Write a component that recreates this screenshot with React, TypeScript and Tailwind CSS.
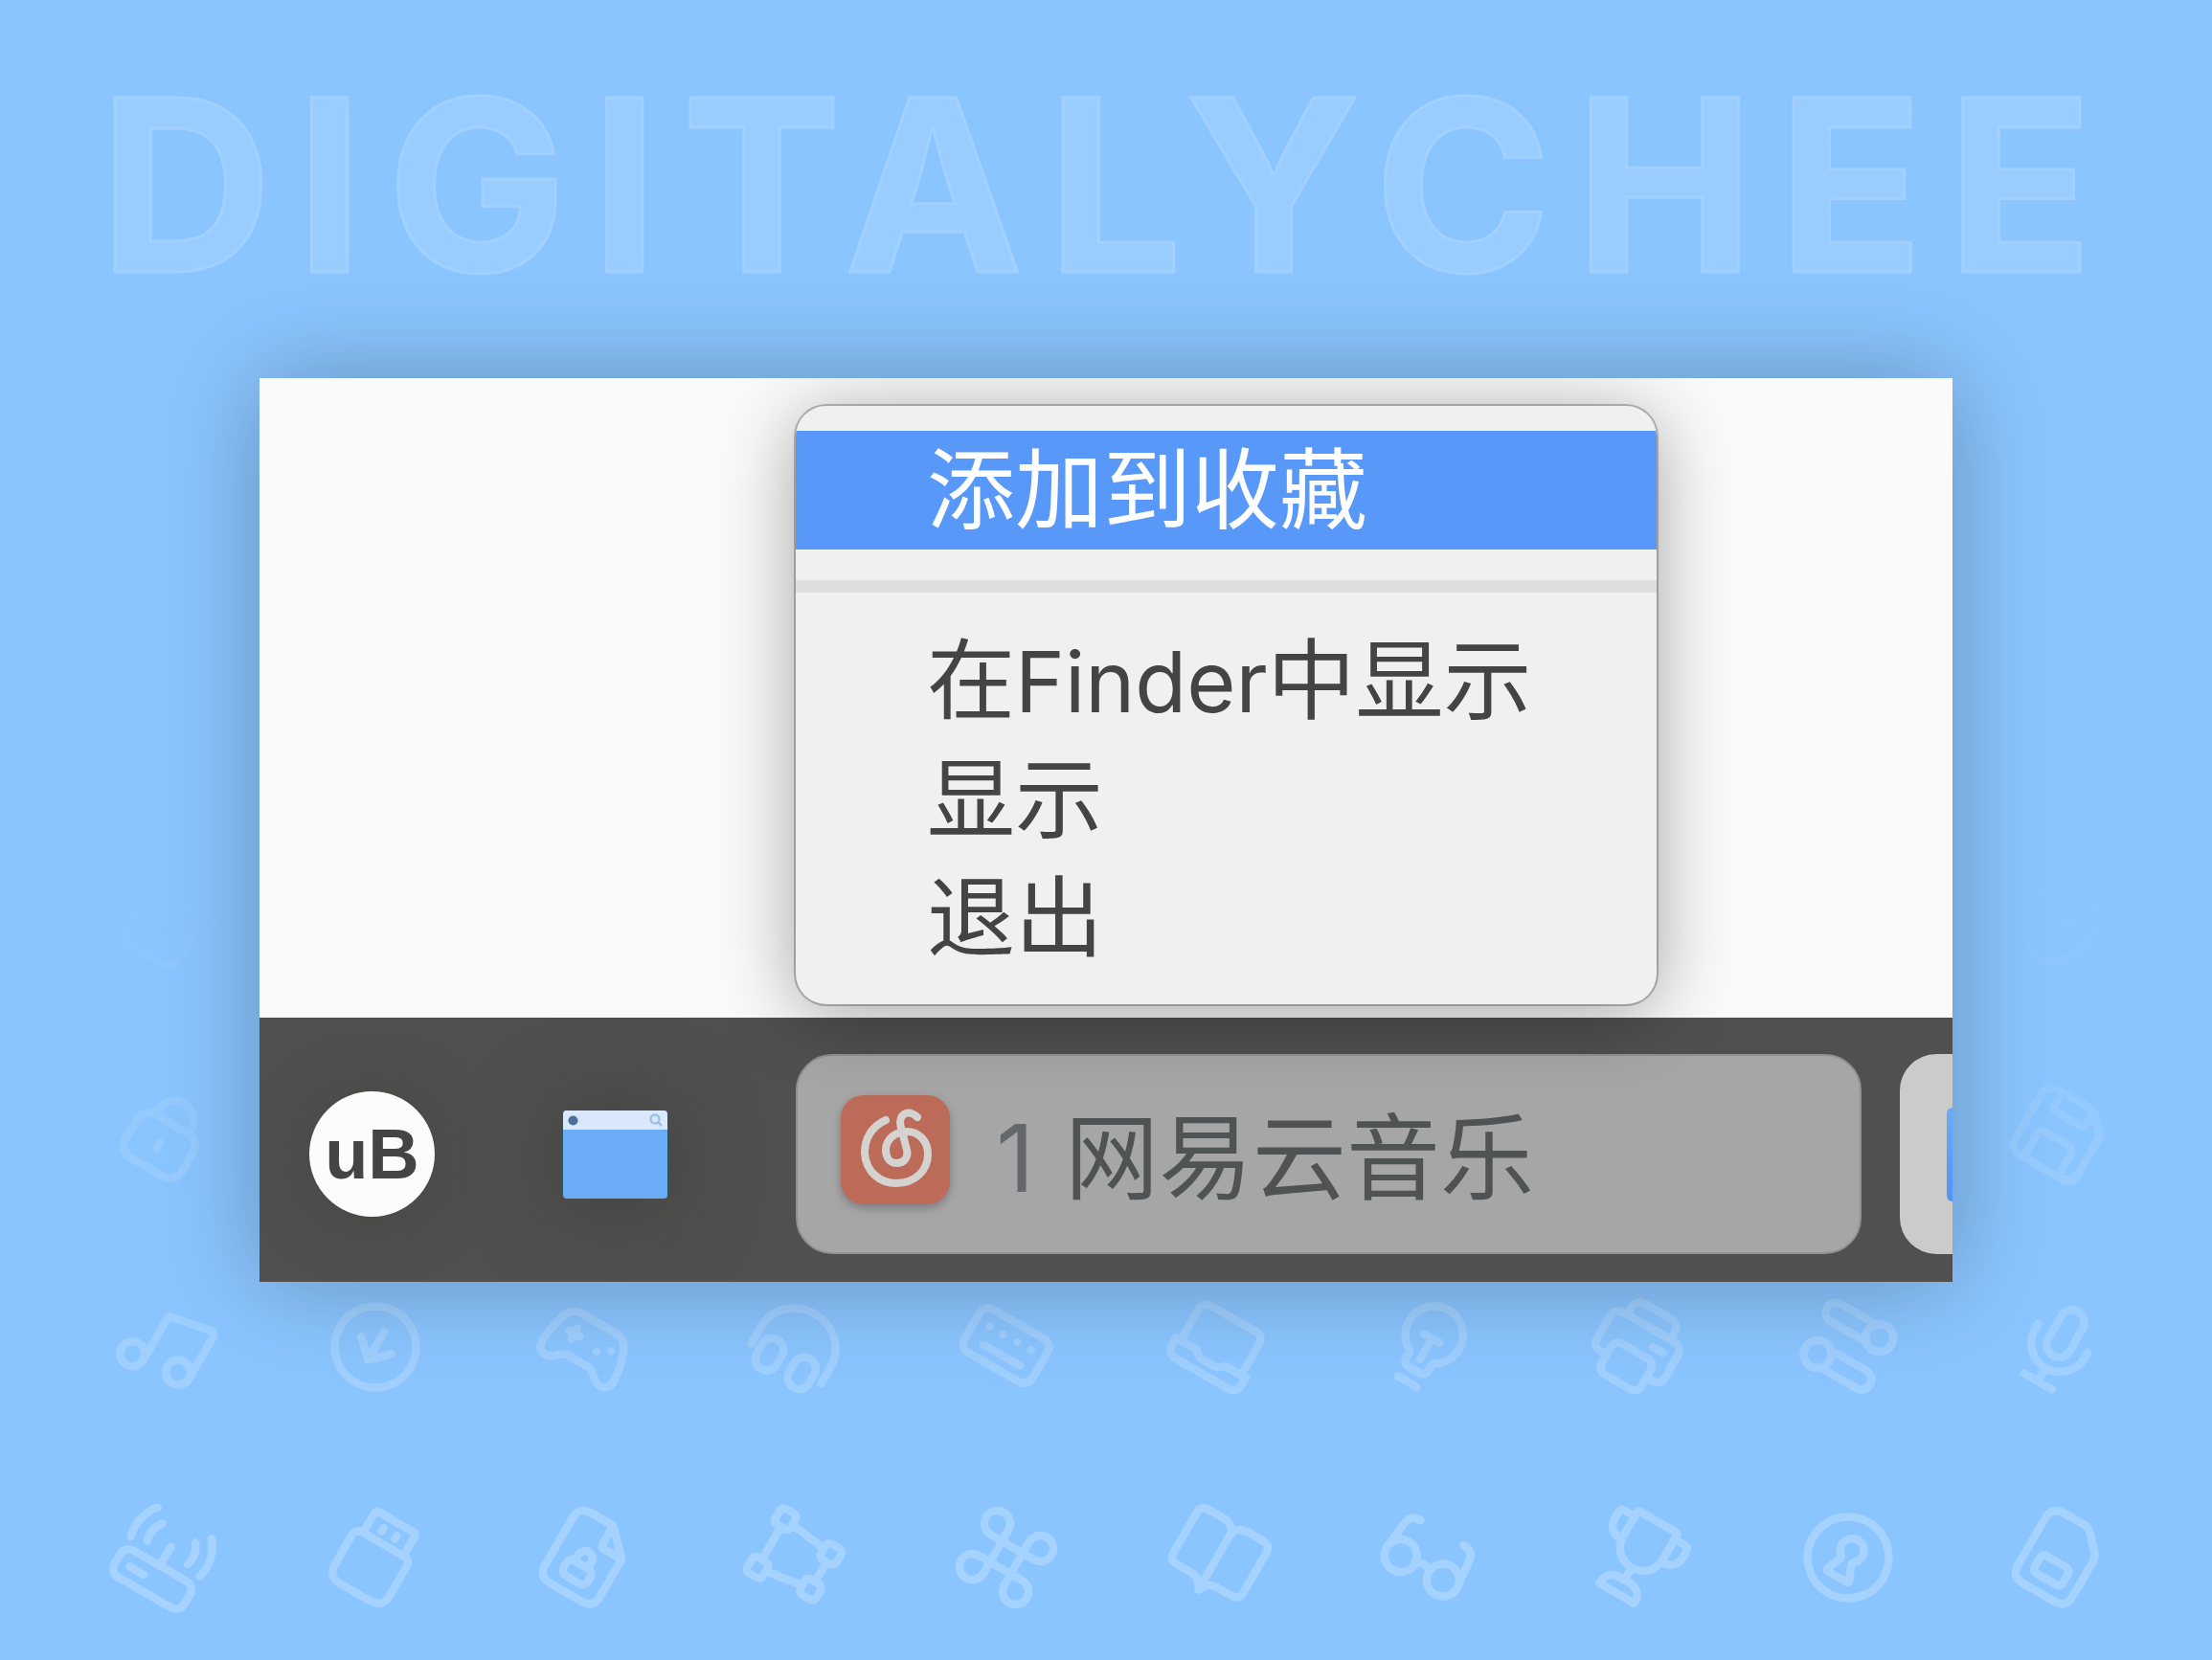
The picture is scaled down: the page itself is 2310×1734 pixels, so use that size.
import type { ReactNode } from "react";

const SANS = "font-[Inter,'Noto_Sans_CJK_SC',sans-serif]";

/* Background glyphs are drawn upright around (0,0) and tilted by the Glyph frame. */
function Glyph({ children }: { children: ReactNode }) {
  return (
    <svg
      viewBox="-60 -60 120 120"
      className="size-[120px] shrink-0 overflow-visible"
      fill="none"
      stroke="currentColor"
      strokeWidth="8.5"
      strokeLinecap="round"
      strokeLinejoin="round"
      aria-hidden="true"
    >
      <g transform="rotate(30)">{children}</g>
    </svg>
  );
}

const Edit = () => (
  <Glyph>
    <rect x="-33" y="-29" width="64" height="65" rx="14" />
    <path d="M33 -36L44 -27M-6 8L-1 8" />
  </Glyph>
);
const Shield = () => (
  <Glyph>
    <path d="M0 -42L34 -30V-4C34 20 18 34 0 41C-18 34 -34 20 -34 -4V-30Z" />
    <path d="M-15 -4L-6 6L15 -15" />
  </Glyph>
);
const Lock = () => (
  <Glyph>
    <rect x="-34" y="-15" width="68" height="52" rx="14" />
    <path d="M-20 -15V-20a20 20 0 0 1 40 0V-15M-1 8V16" />
  </Glyph>
);
const Floppy = () => (
  <Glyph>
    <path d="M-24 -42H12q5 0 9 4L33 -26q4 4 4 9V24q0 13 -13 13H-25q-13 0 -13 -13V-28q0 -14 14 -14Z" />
    <path d="M-20 -42V-26q0 5 5 5H14q5 0 5 -5V-40M-21 37V11q0 -8 8 -8H12q8 0 8 8V37" />
  </Glyph>
);
const Music = () => (
  <Glyph>
    <circle cx="-25.5" cy="23" r="13" />
    <circle cx="25.5" cy="16" r="13" />
    <path d="M-12.5 23V-27q0 -3 3 -3.6L34 -38.8q4.500 -.7 4.500 3.500V16" />
  </Glyph>
);
const ArrowCircle = () => (
  <Glyph>
    <circle r="42.500" />
    <path d="M-18 -2L0 15.500L18 -2M0 -18V15" />
  </Glyph>
);
const Gamepad = () => (
  <Glyph>
    <path d="M-20 -28H18C28 -28 33 -24 36 -16C40 -5 43 7 43 17C43 25 37 29 31 28C23 27 21 17 12 17H-12C-21 17 -23 27 -31 28C-38 29 -43 25 -43 17C-43 7 -40 -5 -37 -16C-34 -24 -29 -28 -20 -28Z" />
    <path d="M-24 -6H-11M-17.500 -12.500V.5" />
    <path d="M12 -1h.01M25 -9.500h.01" />
  </Glyph>
);
const Headphones = () => (
  <Glyph>
    <path d="M-42 20V0A42 40 0 0 1 42 0V20" />
    <rect x="-32" y="3" width="24" height="35" rx="12" />
    <rect x="7" y="3" width="24" height="35" rx="12" />
  </Glyph>
);
const Keyboard = () => (
  <Glyph>
    <rect x="-42" y="-27" width="82" height="52" rx="10" />
    <path d="M-26 -10h.01M-9.500 -10h.01M7.500 -10h.01M24 -10h.01M-22 10H22" />
  </Glyph>
);
const Laptop = () => (
  <Glyph>
    <path d="M-36.500 13V-24q0 -10 10 -10H26.500q10 0 10 10V13" />
    <path d="M-42 13H-19C-14 13 -14 19 -8 19H8C14 19 14 13 19 13H42V21q0 11 -11 11H-31q-11 0 -11 -11Z" />
  </Glyph>
);
const Bulb = () => (
  <Glyph>
    <path d="M-15 12A30 30 0 1 1 14 12C12 15 13 17 13 20Q13 28 5 28H-6Q-14 28 -14 20C-14 17 -13 15 -15 12Z" />
    <path d="M-10 -10H9M-.5 -10V15M-12 42H11" />
  </Glyph>
);
const Printer = () => (
  <Glyph>
    <path d="M-26 -24V-32q0 -11 11 -11H15q11 0 11 11V-24" />
    <path d="M-24 23H-31q-10 0 -10 -10V-12q0 -12 12 -12H29q12 0 12 12V13q0 10 -10 10H24" />
    <rect x="-24" y="5" width="48" height="37" rx="9" />
    <path d="M14 -8H26" />
  </Glyph>
);
const Toggles = () => (
  <Glyph>
    <circle cx="23.500" cy="-24.500" r="14.500" />
    <circle cx="-24" cy="22.500" r="14.500" />
    <path d="M13 -35H-29a10.500 10.500 0 0 0 0 21H13M-13 12H29a10.500 10.500 0 0 1 0 21H-13" />
  </Glyph>
);
const Mic = () => (
  <Glyph>
    <rect x="-14" y="-42" width="26" height="53" rx="13" />
    <path d="M-31 -10V-4A30 30 0 0 0 29 -4V-10M-1 27V42M-18 42H16" />
  </Glyph>
);
const Router = () => (
  <Glyph>
    <rect x="-42" y="10" width="84" height="32" rx="10" />
    <path d="M-27 26.500H-10M0 10V-13" />
    <path d="M-24.500 -6A26 26 0 0 1 -20 -29.500M20 -29.500A26 26 0 0 1 24.500 -6" />
    <path d="M-41.500 -1.500A43 43 0 0 1 -32.500 -41.500M32.500 -41.500A43 43 0 0 1 41.500 -1.500" />
  </Glyph>
);
const Usb = () => (
  <Glyph>
    <path d="M-24 -16V-40q0 -3 3 -3H21q3.500 0 3.500 3V-16" />
    <path d="M-25 -16H25q8 0 8 9V27q0 15 -15 15H-18q-15 0 -15 -15V-7q0 -9 8 -9Z" />
    <path d="M-8 -31V-27M8 -31V-27" />
  </Glyph>
);
const LockedFile = () => (
  <Glyph>
    <path d="M8 -43H-18q-15 0 -15 15V28q0 14 14 14H19q14 0 14 -14V-17L8 -43V-21q0 4 4 4H33" />
    <rect x="-15" y="9" width="29" height="18" rx="6" />
    <path d="M-8.500 9V2a8 8.500 0 0 1 16 0V9" />
  </Glyph>
);
const VectorBox = () => (
  <Glyph>
    <rect x="-39" y="-39" width="19" height="19" rx="5" />
    <rect x="20.500" y="-31" width="19" height="19" rx="5" />
    <rect x="20.500" y="11.500" width="19" height="19" rx="5" />
    <rect x="-39" y="19.500" width="19" height="19" rx="5" />
    <path d="M-20 -28L20 -23M30 -12V11M20 22L-20 28M-29.500 19V-20" />
  </Glyph>
);
const Command = () => (
  <Glyph>
    <path d="M12.500 -26V26a13.500 13.500 0 1 0 13.500 -13.500H-26a13.500 13.500 0 1 0 13.500 13.500V-26a13.500 13.500 0 1 0 -13.500 13.500H26a13.500 13.500 0 1 0 -13.500 -13.500" />
  </Glyph>
);
const Book = () => (
  <Glyph>
    <path d="M0 -26C0 -35 -7 -39 -15 -39H-33q-9 0 -9 9V18q0 9 9 9H-16C-8 27 -3 31 0 39C3 31 8 27 16 27H33q9 0 9 -9V-30q0 -9 -9 -9H15C7 -39 0 -35 0 -26V28" />
  </Glyph>
);
const Glasses = () => (
  <Glyph>
    <circle cx="-25.500" cy="12.500" r="17" />
    <circle cx="25.500" cy="12.500" r="17" />
    <path d="M-8.500 10Q0 6 8.500 10M-42.500 12L-39 -19q1 -11 13 -11M42.500 12L39 -19q-1 -11 -13 -11" />
  </Glyph>
);
const Trophy = () => (
  <Glyph>
    <path d="M-21 -43H21q3 0 3 3V-13C24 3 13 12 0 12C-13 12 -24 3 -24 -13V-40q0 -3 3 -3Z" />
    <path d="M-24 -36H-36q-5 0 -5 5V-23C-41 -14 -33 -8 -24 -8M24 -36H36q5 0 5 5V-23C41 -14 33 -8 24 -8" />
    <path d="M0 12V27M-21 43C-21 33 -15 27 -6 27H6C15 27 21 33 21 43Z" />
  </Glyph>
);
const Keyhole = () => (
  <Glyph>
    <circle r="42.500" />
    <path d="M-7 2A12.500 12.500 0 1 1 7 2Q6 4 7 6L13 20q1 3 -2 3H-11q-3 0 -2 -3L-7 6Q-6 4 -7 2Z" />
  </Glyph>
);
const SimCard = () => (
  <Glyph>
    <path d="M-18 -43H6q5 0 9 4L29 -24q4 4 4 10V28q0 14 -14 14H-19q-14 0 -14 -14V-28q0 -15 15 -15Z" />
    <rect x="-17" y="5" width="34" height="21" rx="5" />
  </Glyph>
);

const ROWS = [
  [Edit, Shield],
  [Lock, Floppy],
  [Music, ArrowCircle, Gamepad, Headphones, Keyboard, Laptop, Bulb, Printer, Toggles, Mic],
  [Router, Usb, LockedFile, VectorBox, Command, Book, Glasses, Trophy, Keyhole, SimCard],
];

function Backdrop() {
  return (
    <div className="col-start-1 row-start-1 flex flex-col justify-between pb-[47px]">
      <h1 className="pt-[68px] pl-1 text-center font-[Inter,sans-serif] text-[250px] leading-[250px] font-bold tracking-widest whitespace-nowrap text-[#99ccff] [-webkit-text-stroke:3px_#a3d1ff]">
        DIGITALYCHEE
      </h1>
      <div className="flex flex-col gap-[100px] pr-[100px] pl-28 text-[#a5d2ff] [mask-image:linear-gradient(to_bottom,transparent_0px,black_640px)]">
        {ROWS.map((row, i) => (
          <div key={i} className="flex justify-between">
            {row.map((Icon, j) => (
              <Icon key={j} />
            ))}
          </div>
        ))}
      </div>
    </div>
  );
}

const ITEM = "block h-[124px] w-full pl-[137px] text-left text-[92px] leading-[124px] whitespace-nowrap";

function ContextMenu() {
  return (
    <div
      role="menu"
      className="relative z-10 w-[899px] overflow-clip rounded-[32px] bg-[#f0f0f0] pt-[26px] pb-7 text-[#444444] shadow-[0_0_0_2px_rgba(0,0,0,0.24),0_10px_80px_rgba(0,0,0,0.35)]"
    >
      <button role="menuitem" className={`${ITEM} bg-[#5898f8] text-white`}>
        添加到收藏
      </button>
      <hr className="mt-8 mb-[30px] h-[13px] border-0 bg-[#dedede]" />
      <button role="menuitem" className={ITEM}>
        在<span className="text-[88px]">Finder</span>中显示
      </button>
      <button role="menuitem" className={ITEM}>
        显示
      </button>
      <button role="menuitem" className={ITEM}>
        退出
      </button>
    </div>
  );
}

function WindowIcon() {
  return (
    <svg viewBox="0 0 109 92" className="h-[92px] w-[109px]" aria-hidden="true">
      <rect width="109" height="92" rx="4" fill="#6aacf6" />
      <path d="M4 0H105q4 0 4 4V20H0V4q0 -4 4 -4Z" fill="#d9e8fc" />
      <circle cx="10.500" cy="10.500" r="5" fill="#4f6f99" />
      <circle cx="96" cy="9" r="4.500" fill="none" stroke="#9dbfe8" strokeWidth="2.500" />
      <path d="M99 12L103 16" stroke="#9dbfe8" strokeWidth="2.500" />
    </svg>
  );
}

function NeteaseIcon() {
  return (
    <svg viewBox="0 0 114 114" className="size-[114px] shrink-0 rounded-3xl bg-[#bc6b58] shadow-[0_4px_10px_rgba(0,0,0,0.25)]" aria-hidden="true">
      <path
        d="M47 26C31 33 25 47 25 60C26 81 42 92 58 92C77 92 91 79 91 62C91 47 81 38 69 38C56 38 47 47 47 57C47 66 52 71 58.500 71C66 71 71 65 69 57L62.500 32C60 20 70 14 80 23"
        fill="none"
        stroke="#d5d3d0"
        strokeWidth="8"
        strokeLinecap="round"
        strokeLinejoin="round"
      />
    </svg>
  );
}

function Dock() {
  return (
    <div className="flex items-center overflow-hidden bg-[#505050] pt-[38px] pb-[29px] pl-[52px]">
      <button className="size-[131px] shrink-0 rounded-full bg-[#fcfcfc] font-['Liberation_Sans',sans-serif] text-[74px] leading-[131px] font-bold text-[#444444] shadow-[0_4px_60px_rgba(60,60,50,0.5)]">
        uB
      </button>
      <button aria-label="Window" className="ml-[134px] shrink-0 shadow-[0_4px_90px_rgba(50,50,40,0.6)]">
        <WindowIcon />
      </button>
      <button className="ml-[134px] flex h-[209px] flex-1 items-start overflow-hidden rounded-[38px] border-2 border-[#8f9194] bg-[#a6a6a6] pt-[41px] pl-[45px] text-left text-[98px] leading-[120px] whitespace-nowrap text-[#505354]">
        <NeteaseIcon />
        <span className="ml-10 flex gap-8 pt-1.5">
          <span className="w-[48px] text-right text-[#65686b]">1</span>
          <span>网易云音乐</span>
        </span>
      </button>
      <button aria-label="Next task" className="ml-10 flex h-[209px] w-[55px] shrink-0 items-center justify-end rounded-l-[38px] bg-[#cbcbc9]">
        <span className="h-[98px] w-1.5 rounded-l-md bg-linear-to-b from-[#6aacf6] to-[#4f93f8]" />
      </button>
    </div>
  );
}

export default function App() {
  return (
    <div className={`grid min-h-screen grid-cols-1 overflow-hidden bg-[#8bc5ff] ${SANS}`}>
      <Backdrop />
      <main className="z-10 col-start-1 row-start-1 px-[271px] pt-[395px]">
        <div className="overflow-hidden shadow-[0_0_98px_rgba(0,0,0,0.27)]">
          <div className="bg-[#fafafa] pt-[29px] pb-[14px] pl-[560px]">
            <ContextMenu />
          </div>
          <Dock />
        </div>
      </main>
    </div>
  );
}
